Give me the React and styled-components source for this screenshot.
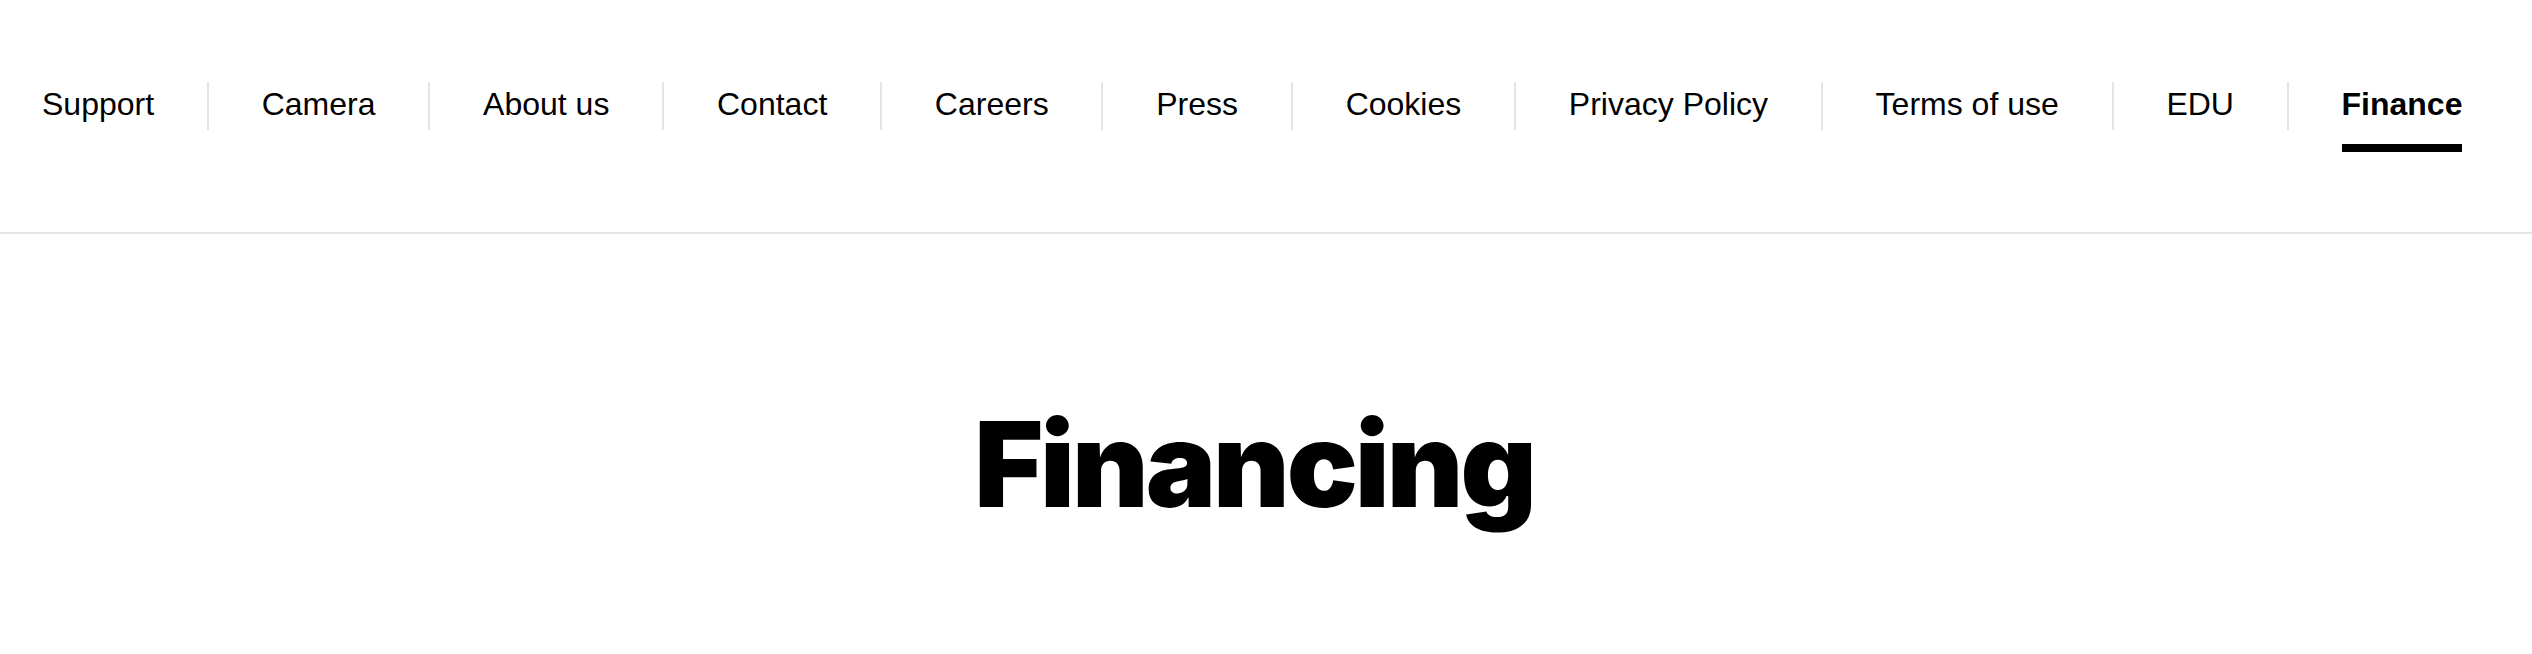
import styled, { createGlobalStyle } from 'styled-components';

const GlobalStyle = createGlobalStyle`
  html, body {
    margin: 0;
    padding: 0;
    background: #fff;
  }
  body {
    font-family: 'Liberation Sans', Arial, sans-serif;
    color: #000;
  }
`;

const Header = styled.header`
  padding: 82px 0 102px 42px;
  border-bottom: 2px solid #e6e6e6;
`;

const Nav = styled.nav`
  display: flex;
  align-items: stretch;
`;

const NavItem = styled.a`
  position: relative;
  display: block;
  height: 44px;
  padding: 0 52.8px 4px;
  line-height: 44px;
  font-size: 32px;
  font-weight: ${(p) => (p.$active ? 700 : 400)};
  color: #000;
  text-decoration: none;
  white-space: nowrap;
  border-left: 2px solid #e4e4e4;

  &:first-child {
    padding-left: 0;
    border-left: none;
  }

  ${(p) =>
    p.$active &&
    `
    &::after {
      content: '';
      position: absolute;
      left: 52.8px;
      right: 52.8px;
      top: 62px;
      height: 8px;
      background: #000;
    }
  `}
`;

const Main = styled.main`
  padding: 160px 24px 0 0;
  text-align: center;
`;

const Title = styled.h1`
  margin: 0;
  font-family: 'Inter', 'Liberation Sans', sans-serif;
  font-weight: 900;
  font-size: 118px;
  line-height: 1.2;
  letter-spacing: -3px;
`;

const links = [
  'Support',
  'Camera',
  'About us',
  'Contact',
  'Careers',
  'Press',
  'Cookies',
  'Privacy Policy',
  'Terms of use',
  'EDU',
  'Finance',
];

function App() {
  return (
    <>
      <GlobalStyle />
      <Header>
        <Nav>
          {links.map((label) => (
            <NavItem key={label} href="#" $active={label === 'Finance'}>
              {label}
            </NavItem>
          ))}
        </Nav>
      </Header>
      <Main>
        <Title>Financing</Title>
      </Main>
    </>
  );
}

export default App;
